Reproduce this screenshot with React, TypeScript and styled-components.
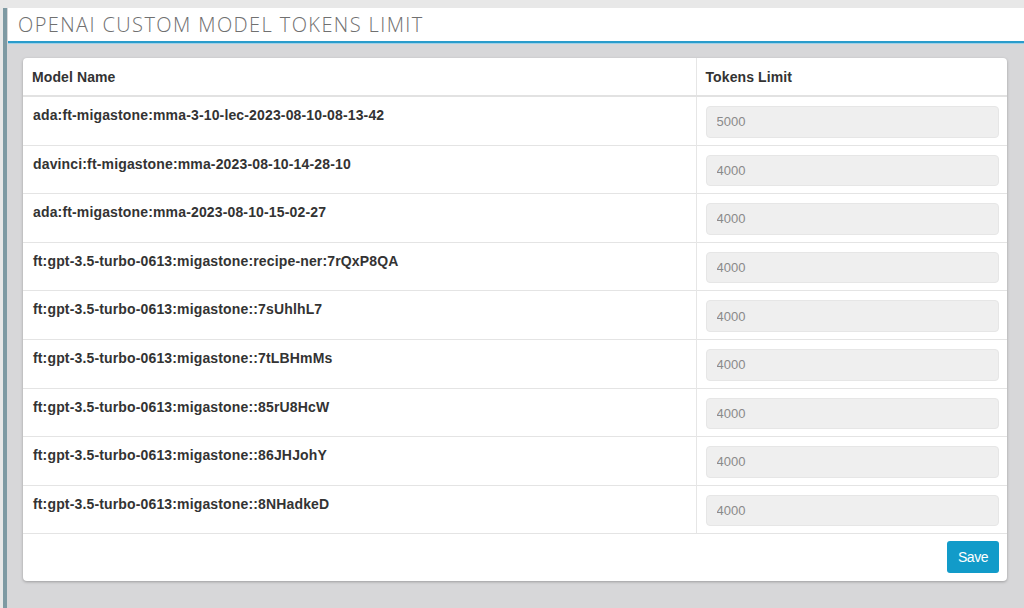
import React from "react";
import styled, { createGlobalStyle } from "styled-components";

const GlobalStyle = createGlobalStyle`
  html, body {
    margin: 0;
    padding: 0;
    background: #e8e8e8;
    font-family: "Liberation Sans", Arial, Helvetica, sans-serif;
  }
  * { box-sizing: border-box; }
`;

const Page = styled.div`
  padding: 8px 0 0 3px;
  height: 608px;
  overflow: hidden;
`;

const Frame = styled.div`
  border-left: 4px solid #7e9aa3;
  background: #d7d7d9;
  height: 600px;
  display: flex;
  flex-direction: column;
`;

const TitleBar = styled.div`
  height: 35px;
  background: #ffffff;
  margin-left: 1px;
  border-bottom: 2px solid #2a9ccb;
  box-shadow: 0 1px 0 #9fd0e6;
  display: flex;
  align-items: center;
  padding-left: 10px;
`;

const Title = styled.h1`
  margin: 0;
  font-family: "Open Sans", "Liberation Sans", sans-serif;
  font-weight: 300;
  font-size: 20px;
  color: #707070;
  letter-spacing: 1.4px;
  line-height: 1;
`;

const Content = styled.div`
  padding: 15px 17px 0 16px;
`;

const Card = styled.div`
  background: #ffffff;
  border-radius: 4px;
  box-shadow: 0 1px 3px rgba(0, 0, 0, 0.28);
  overflow: hidden;
`;

const Table = styled.table`
  width: 100%;
  border-collapse: collapse;
  table-layout: fixed;
`;

const HeadCell = styled.th<{ $w?: string }>`
  width: ${(p) => p.$w ?? "auto"};
  text-align: left;
  font-size: 14px;
  letter-spacing: 0.1px;
  font-weight: bold;
  color: #333;
  line-height: 20px;
  padding: 9px 9px 8px;
  border-bottom: 2px solid #e2e2e2;
  & + & {
    border-left: 1px solid #e6e6e6;
  }
`;

const Row = styled.tr`
  border-top: 1px solid #e4e4e4;
  &:first-child {
    border-top: none;
  }
`;

const NameCell = styled.td`
  vertical-align: top;
  font-size: 14px;
  letter-spacing: 0.15px;
  font-weight: bold;
  color: #333;
  line-height: 20px;
  padding: 8px 10px;
`;

const InputCell = styled.td`
  vertical-align: top;
  padding: 9px 8px 7px 9px;
  border-left: 1px solid #e6e6e6;
`;

const TokenInput = styled.input`
  display: block;
  width: 100%;
  height: 31.6px;
  background: #efefef;
  border: 1px solid #e6e6e6;
  border-radius: 4px;
  padding: 0 10px;
  font-family: "Liberation Sans", Arial, sans-serif;
  font-size: 13px;
  color: #8a8a8a;
  outline: none;
`;

const Footer = styled.div`
  border-top: 1px solid #e4e4e4;
  display: flex;
  justify-content: flex-end;
  padding: 7px 8px 8px;
`;

const SaveButton = styled.button`
  width: 52px;
  height: 32px;
  background: #129bc9;
  border: none;
  border-radius: 3px;
  color: #ffffff;
  font-family: "Liberation Sans", Arial, sans-serif;
  font-size: 14px;
  letter-spacing: -0.5px;
  cursor: pointer;
`;

const models: { name: string; limit: number }[] = [
  { name: "ada:ft-migastone:mma-3-10-lec-2023-08-10-08-13-42", limit: 5000 },
  { name: "davinci:ft-migastone:mma-2023-08-10-14-28-10", limit: 4000 },
  { name: "ada:ft-migastone:mma-2023-08-10-15-02-27", limit: 4000 },
  { name: "ft:gpt-3.5-turbo-0613:migastone:recipe-ner:7rQxP8QA", limit: 4000 },
  { name: "ft:gpt-3.5-turbo-0613:migastone::7sUhlhL7", limit: 4000 },
  { name: "ft:gpt-3.5-turbo-0613:migastone::7tLBHmMs", limit: 4000 },
  { name: "ft:gpt-3.5-turbo-0613:migastone::85rU8HcW", limit: 4000 },
  { name: "ft:gpt-3.5-turbo-0613:migastone::86JHJohY", limit: 4000 },
  { name: "ft:gpt-3.5-turbo-0613:migastone::8NHadkeD", limit: 4000 },
];

export default function App() {
  return (
    <>
      <GlobalStyle />
      <Page>
        <Frame>
          <TitleBar>
            <Title>OPENAI CUSTOM MODEL TOKENS LIMIT</Title>
          </TitleBar>
          <Content>
            <Card>
              <Table>
                <thead>
                  <tr>
                    <HeadCell $w="673px">Model Name</HeadCell>
                    <HeadCell>Tokens Limit</HeadCell>
                  </tr>
                </thead>
                <tbody>
                  {models.map((m) => (
                    <Row key={m.name}>
                      <NameCell>{m.name}</NameCell>
                      <InputCell>
                        <TokenInput defaultValue={String(m.limit)} />
                      </InputCell>
                    </Row>
                  ))}
                </tbody>
              </Table>
              <Footer>
                <SaveButton>Save</SaveButton>
              </Footer>
            </Card>
          </Content>
        </Frame>
      </Page>
    </>
  );
}
